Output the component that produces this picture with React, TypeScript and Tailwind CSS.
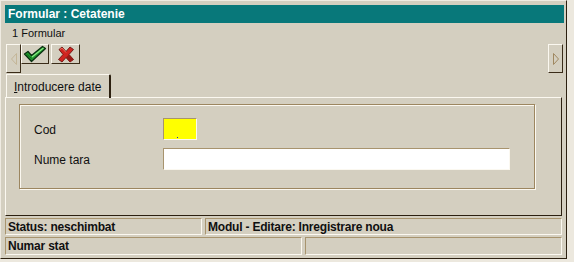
import React from "react";

const face = "bg-[#d4cfc0]";

// raised 3d button, like a win classic toolbar button
const Btn = ({ className, children }: { className: string; children?: React.ReactNode }) => (
  <div
    className={`flex items-center justify-center border border-t-[#fbf8f0] border-l-[#fbf8f0] border-r-[#3a2c18] border-b-[#3a2c18] ${face} ${className}`}
  >
    {children}
  </div>
);

const Sunken = ({ className, children }: { className: string; children?: React.ReactNode }) => (
  <div
    className={`flex items-center border border-t-[#a8946e] border-l-[#a8946e] border-r-[#fbf8f0] border-b-[#fbf8f0] ${className}`}
  >
    {children}
  </div>
);

export default function App() {
  return (
    <div
      className="w-[574px] h-[262px] bg-[#ece8de] overflow-hidden"
      style={{ fontFamily: '"Liberation Sans", Arial, sans-serif' }}
    >
      <div className={`w-[567px] h-[259px] ${face} border border-t-[#efebe2] border-l-[#efebe2] border-r-[#2c2010] border-b-[#2c2010] pl-[4px] pt-[4px] pr-[2px] flex flex-col`}>
        {/* title bar */}
        <div className="h-[18px] w-[559px] bg-[#08787a] flex items-center pl-[3px]">
          <span className="text-white font-bold text-[12px] leading-none">Formular : Cetatenie</span>
        </div>

        {/* form caption */}
        <div className="h-[20px] flex items-center pl-[7px] text-[11px] text-[#101010]">1 Formular</div>

        {/* toolbar */}
        <div className="h-[30px] flex items-start pl-[1px] pr-[1px] pt-[1px]">
          <Btn className="w-[15px] h-[29px]">
            <svg width="8" height="14" viewBox="0 0 8 14">
              <path d="M6.5 1.5 L1.5 7 L6.5 12.5 Z" fill="none" stroke="#c4b698" strokeWidth="1" />
            </svg>
          </Btn>
          <Btn className="w-[28px] h-[20px]">
            <svg width="24" height="18" viewBox="0 0 24 18">
              <path d="M1.5 9 L5 6.5 L8.5 10.5 L19.5 1.5 L22.5 3.5 L8.5 16.5 Z" fill="#1f9a2c" stroke="#0a3010" strokeWidth="1.3" strokeLinejoin="round" />
              <path d="M3.5 9 L8.5 13.5" stroke="#0d6a1a" strokeWidth="1" />
              <path d="M9 12 L20.5 3" stroke="#8ae884" strokeWidth="1.2" />
            </svg>
          </Btn>
          <div className="w-[2px]" />
          <Btn className="w-[29px] h-[20px]">
            <svg width="18" height="17" viewBox="0 0 18 17">
              <path d="M2 3.5 L5 1 L9 5.5 L13 1 L16.5 3.5 L12 8.5 L16.5 13.5 L13 16 L9 11.5 L5 16 L1.5 13.5 L6 8.5 Z" fill="#d02420" stroke="#6a1410" strokeWidth="0.9" strokeLinejoin="round" />
              <path d="M9 11.5 L13 16 L16.5 13.5 L12 8.5 Z" fill="#9a1a16" />
              <path d="M3 3.5 L5 2 L9 6.5" stroke="#f07060" strokeWidth="0.9" fill="none" />
            </svg>
          </Btn>
          <div className="flex-1" />
          <Btn className="w-[15px] h-[29px]">
            <svg width="8" height="14" viewBox="0 0 8 14">
              <path d="M1.5 1.5 L6.5 7 L1.5 12.5 Z" fill="none" stroke="#a08860" strokeWidth="1" />
            </svg>
          </Btn>
        </div>

        {/* tab header */}
        <div className="h-[24px] flex items-end pl-[1px]">
          <div className="h-[24px] w-[105px] border-t border-l border-r-2 border-t-[#fbf8f0] border-l-[#fbf8f0] border-r-[#2c2010] rounded-tr-[2px] flex items-center pl-[7px] text-[12px] text-[#101010] relative top-[1px] z-10">
            <span><span className="underline">I</span>ntroducere date</span>
          </div>
        </div>

        {/* tab panel */}
        <div className="h-[119px] w-[557px] border border-t-[#fbf8f0] border-l-[#fbf8f0] border-r-[#2c2010] border-b-[#2c2010] pl-[13px] pt-[6px]">
          <div className="w-[516px] h-[85px] border border-[#9c8660] shadow-[1px_1px_0_#fbf8f0,inset_1px_1px_0_#fbf8f0] flex flex-col pt-[13px] gap-[8px]">
            <div className="flex items-center h-[22px]">
              <span className="w-[143px] pl-[14px] text-[12px] text-[#101010] pt-[2px]">Cod</span>
              <Sunken className="w-[34px] h-[22px] bg-[#ffff00] border-t-[#202020] border-l-[#202020] relative">
                <span className="absolute left-[13px] bottom-[1px] w-[1px] h-[1px] bg-[#2020c0]" />
              </Sunken>
            </div>
            <div className="flex items-center h-[22px]">
              <span className="w-[143px] pl-[14px] text-[12px] text-[#101010] pt-[2px]">Nume tara</span>
              <Sunken className="w-[347px] h-[22px] bg-white border-t-[#202020] border-l-[#202020]" />
            </div>
          </div>
        </div>

        {/* status bar */}
        <div className="flex flex-col gap-[2px] mt-[2px] w-[557px] text-[12px] font-bold text-[#101010] tracking-[-0.2px]">
          <div className="flex gap-[3px] h-[17px]">
            <Sunken className="w-[197px] h-[17px] pl-[2px]">Status: neschimbat</Sunken>
            <Sunken className="flex-1 h-[17px] pl-[2px]">Modul - Editare: Inregistrare noua</Sunken>
          </div>
          <div className="flex gap-[3px] h-[18px]">
            <Sunken className="w-[297px] h-[18px] pl-[2px]">Numar stat</Sunken>
            <Sunken className="flex-1 h-[18px]" />
          </div>
        </div>
      </div>
    </div>
  );
}
